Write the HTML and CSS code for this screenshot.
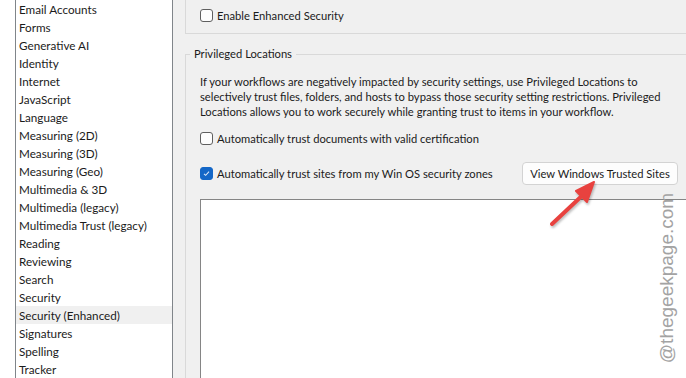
FILE: index.html
```html
<!DOCTYPE html>
<html lang="en">
<head>
  <meta charset="UTF-8" />
  <title>Preferences - Security (Enhanced)</title>
  <link rel="stylesheet" href="styles.css">
</head>
<body>
  <div class="sidebar">
    <ul class="categories">
      <li>Email Accounts</li>
      <li>Forms</li>
      <li>Generative AI</li>
      <li>Identity</li>
      <li>Internet</li>
      <li>JavaScript</li>
      <li>Language</li>
      <li>Measuring (2D)</li>
      <li>Measuring (3D)</li>
      <li>Measuring (Geo)</li>
      <li>Multimedia &amp; 3D</li>
      <li>Multimedia (legacy)</li>
      <li>Multimedia Trust (legacy)</li>
      <li>Reading</li>
      <li>Reviewing</li>
      <li>Search</li>
      <li>Security</li>
      <li class="selected">Security (Enhanced)</li>
      <li>Signatures</li>
      <li>Spelling</li>
      <li>Tracker</li>
    </ul>
  </div>

  <div class="main">
    <div class="group-top">
      <label class="check-row">
        <input type="checkbox" class="check" />
        <span>Enable Enhanced Security</span>
      </label>
    </div>

    <fieldset class="group">
      <legend>Privileged Locations</legend>
      <p class="intro">
        If your workflows are negatively impacted by security settings, use Privileged Locations to<br>
        selectively trust files, folders, and hosts to bypass those security setting restrictions. Privileged<br>
        Locations allows you to work securely while granting trust to items in your workflow.
      </p>
      <label class="check-row first">
        <input type="checkbox" class="check" />
        <span>Automatically trust documents with valid certification</span>
      </label>
      <div class="trust-row">
        <label class="check-row">
          <input type="checkbox" class="check" checked />
          <span>Automatically trust sites from my Win OS security zones</span>
        </label>
        <button type="button" class="btn">View Windows Trusted Sites</button>
      </div>
      <div class="site-list"></div>
    </fieldset>
  </div>

  <!-- annotation overlay -->
  <svg class="arrow" width="70" height="60" viewBox="0 0 70 60">
    <path d="M12 50 L46 18" stroke="#e8423f" stroke-width="4" stroke-linecap="round" fill="none"/>
    <path d="M54 8 L36 17 L47 28 Z" fill="#e8423f" stroke="#e8423f" stroke-width="2" stroke-linejoin="round"/>
  </svg>
  <div class="watermark">@thegeekpage.com</div>
</body>
</html>
```

FILE: styles.css
```css
* {
  box-sizing: border-box;
}

body {
  margin: 0;
  height: 378px;
  overflow: hidden;
  display: flex;
  position: relative;
  font-family: Lato, "Noto Sans", sans-serif;
  font-size: 11.2px;
  color: #1b1b1b;
  background-color: #f0f0f0;
}

/* Left category list */
.sidebar {
  width: 173px;
  flex-shrink: 0;
  background-color: #fff;
  padding-left: 15px;
  font-size: 11.7px;
}

.categories {
  list-style: none;
  margin: 0;
  padding: 0;
  height: 100%;
  border-left: 1px solid #80858a;
  border-right: 1px solid #80858a;
}

.categories li {
  height: 18px;
  line-height: 18px;
  padding-left: 3px;
  white-space: nowrap;
}

.categories li.selected {
  background-color: #f0f0f0;
}

/* Right panel */
.main {
  flex: 1;
  display: flex;
  flex-direction: column;
  padding-left: 12px;
  min-width: 0;
}

.group-top {
  height: 34px;
  flex-shrink: 0;
  border-left: 1px solid #d9d9d9;
  border-bottom: 1px solid #d9d9d9;
  padding: 8px 0 0 14px;
}

.check-row {
  display: flex;
  align-items: center;
  gap: 4px;
  height: 14px;
  white-space: nowrap;
}

.check {
  appearance: none;
  -webkit-appearance: none;
  width: 13px;
  height: 13px;
  margin: 0;
  border: 1px solid #5f5f5f;
  border-radius: 3px;
  background-color: #fdfdfd;
  flex-shrink: 0;
}

.check:checked {
  border-color: #1467c7;
  background-color: #1467c7;
  background-image: url("data:image/svg+xml,%3Csvg xmlns='http://www.w3.org/2000/svg' viewBox='0 0 13 13'%3E%3Cpath d='M3.5 6.8 L5.5 8.6 L9.5 4.4' fill='none' stroke='%23dfe9f7' stroke-width='1.2'/%3E%3C/svg%3E");
}

.group {
  flex: 1;
  display: flex;
  flex-direction: column;
  margin: 11px 0 0 0;
  padding: 0 0 0 14px;
  border: 1px solid #d9d9d9;
  border-right: none;
  border-bottom: none;
  min-width: 0;
}

.group legend {
  margin-left: -10px;
  padding: 0 4px;
  line-height: 18px;
}

.intro {
  margin: 11px 0 0 0;
  line-height: 15px;
  white-space: nowrap;
}

.check-row.first {
  margin-top: 12px;
}

.trust-row {
  display: flex;
  align-items: center;
  justify-content: space-between;
  margin-top: 17px;
  padding-right: 8px;
}

.btn {
  width: 156px;
  height: 23px;
  padding: 0;
  border: 1px solid #d3d3d3;
  border-radius: 4px;
  background-color: #fdfdfd;
  font-family: inherit;
  font-size: 11.2px;
  color: #1b1b1b;
}

.site-list {
  flex: 1;
  margin-top: 14px;
  margin-right: -4px;
  background-color: #fff;
  border-top: 1px solid #858585;
  border-left: 1px solid #858585;
}

/* Screenshot annotations */
.arrow {
  position: absolute;
  left: 540px;
  top: 174px;
  filter: drop-shadow(1px 2px 1px rgba(0, 0, 0, 0.25));
}

.watermark {
  position: absolute;
  left: 667px;
  top: 278px;
  transform: translate(-50%, -50%) rotate(-90deg);
  font-family: "Liberation Sans", Arial, sans-serif;
  font-size: 19px;
  color: #a3a3a3;
  white-space: nowrap;
}
```
